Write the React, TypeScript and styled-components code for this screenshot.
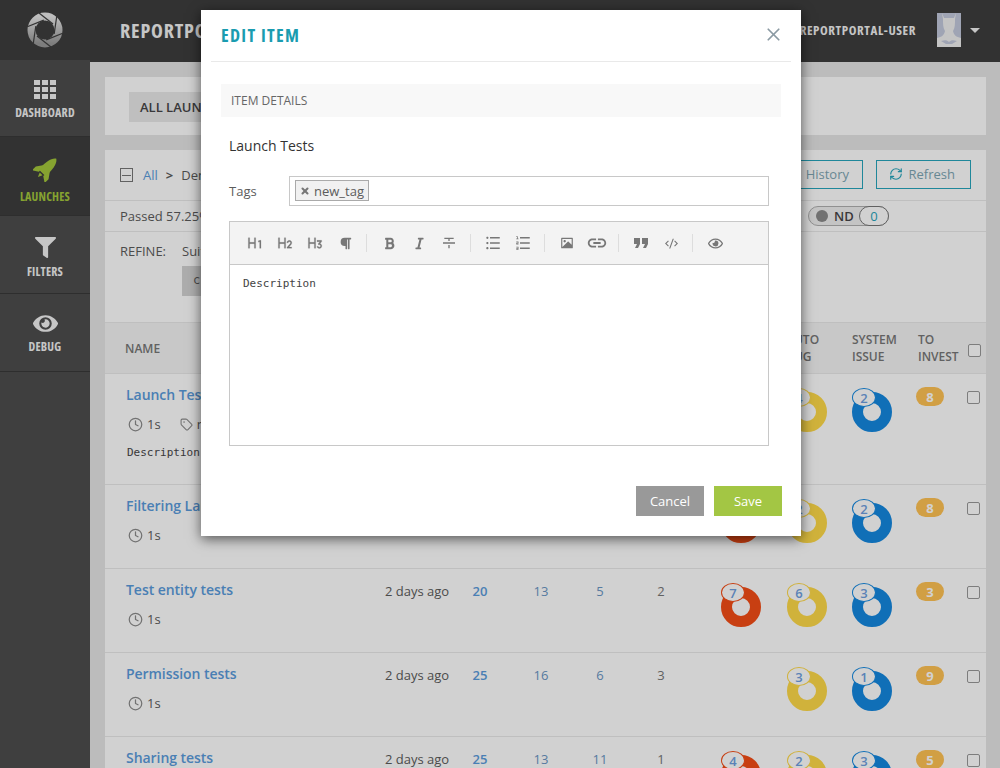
import * as React from 'react'
import styled, { createGlobalStyle } from 'styled-components'
import { Clock, RefreshCw, Tag, X } from 'lucide-react'
import { FaBold, FaFilter, FaItalic, FaParagraph, FaRegEye, FaEye } from 'react-icons/fa'
import { MdFormatQuote, MdLink } from 'react-icons/md'
import {
  RiCodeSSlashLine, RiH1, RiH2, RiH3, RiImageFill, RiListOrdered, RiListUnordered, RiStrikethrough2,
} from 'react-icons/ri'

const Global = createGlobalStyle`
  html, body { margin: 0; padding: 0; background: #e6e6e6; overflow: hidden; }
  body { font-family: "Open Sans", "Noto Sans", sans-serif; font-size: 13px; color: #5c5c5c; }
  * { box-sizing: border-box; }
`

const ROOT = styled.div`
  position: relative;
  display: flex;
  width: 1000px;
  height: 768px;
  overflow: hidden;
`
const Sidebar = styled.div`
  display: flex;
  flex-direction: column;
  width: 90px;
  flex: none;
  background: #4d4d4e;
`
const Logo = styled.div`
  display: flex;
  align-items: center;
  justify-content: center;
  height: 60px;
  background: #3e3e3e;
`
const NavItem = styled.div<{ $active?: boolean; $h: number; $top: number }>`
  display: flex;
  flex-direction: column;
  align-items: center;
  height: ${p => p.$h}px;
  padding-top: ${p => p.$top}px;
  background: ${p => (p.$active ? '#3e3e3e' : '#4d4d4e')};
  border-bottom: 1px solid #393939;
  color: ${p => (p.$active ? '#a4c73b' : '#f2f2f2')};
  svg {
    display: block;
  }
`
const NavLabel = styled.div<{ $mt: number }>`
  margin-top: ${p => p.$mt}px;
  font-weight: 700;
  font-stretch: 75%;
  font-size: 12px;
  line-height: 14px;
  letter-spacing: 0.2px;
`
const Main = styled.div`
  display: flex;
  flex-direction: column;
  flex: 1;
  min-width: 0;
`
const Header = styled.div`
  display: flex;
  align-items: center;
  height: 62px;
  flex: none;
  padding: 0 20px 2px 30px;
  background: #3e3e3e;
  color: #f2f2f2;
`
const Brand = styled.div`
  flex: 1;
  font-weight: 700;
  font-stretch: 75%;
  font-size: 20px;
  letter-spacing: 0.8px;
`
const UserName = styled.div`
  font-weight: 700;
  font-stretch: 75%;
  font-size: 13px;
  letter-spacing: 0.6px;
  margin-right: 21px;
`
const Caret = styled.div`
  margin-left: 9px;
  width: 0;
  height: 0;
  border-left: 5px solid transparent;
  border-right: 5px solid transparent;
  border-top: 5px solid #f2f2f2;
`
const Content = styled.div`
  display: flex;
  flex-direction: column;
  gap: 15px;
  padding: 15px 14px 0 15px;
`
const TabsCard = styled.div`
  height: 58px;
  padding: 15px 24px;
  background: #fff;
`
const TabButton = styled.div`
  display: inline-flex;
  align-items: center;
  width: 200px;
  height: 30px;
  padding-left: 11px;
  background: #e9e9e9;
  font-weight: 600;
  color: #464547;
`
const Card = styled.div`
  background: #fff;
`
const CrumbRow = styled.div`
  display: flex;
  align-items: center;
  height: 51px;
  padding: 0 15px;
  border-bottom: 1px solid #e9e9e9;
`
const MinusBox = styled.div`
  display: flex;
  align-items: center;
  justify-content: center;
  width: 13px;
  height: 14px;
  margin-right: 10px;
  border: 1px solid #777;
  &::after {
    content: '';
    width: 9px;
    height: 1px;
    background: #777;
  }
`
const CrumbLink = styled.span`
  color: #5a9bdc;
`
const CrumbSep = styled.span`
  margin: 0 8px 0 8px;
  font-weight: 700;
`
const Spacer = styled.div`
  flex: 1;
`
const OutlineButton = styled.div<{ $w: number; $pr: number }>`
  display: flex;
  align-items: center;
  justify-content: flex-end;
  gap: 6px;
  width: ${p => p.$w}px;
  height: 29px;
  margin-left: 13px;
  margin-bottom: 2px;
  padding-right: ${p => p.$pr}px;
  border: 1px solid #26a5bc;
  color: #7ea6b4;
`
const StatRow = styled.div`
  display: flex;
  align-items: center;
  height: 31px;
  padding: 0 15px;
  border-bottom: 1px solid #e9e9e9;
`
const NdPill = styled.div`
  display: flex;
  align-items: center;
  height: 20px;
  width: 81px;
  margin-right: 82px;
  padding-left: 7px;
  border: 1px solid #b0b0b0;
  border-radius: 10px;
  background: #f0f0f0;
  font-weight: 600;
  color: #464547;
`
const NdDot = styled.span`
  width: 12px;
  height: 12px;
  border-radius: 50%;
  background: #8a8a8a;
  margin-right: 6px;
`
const NdCount = styled.span`
  display: flex;
  align-items: center;
  justify-content: center;
  width: 30px;
  height: 20px;
  margin-left: auto;
  margin-right: -1px;
  border: 1px solid #777;
  border-radius: 10px;
  background: #fff;
  font-weight: 400;
  color: #26a5bc;
`
const RefineRow = styled.div`
  display: flex;
  height: 90px;
  padding: 10px 15px 0;
`
const RefineLabel = styled.div`
  width: 62px;
`
const Chip = styled.div`
  margin-top: 6px;
  width: 120px;
  height: 30px;
  padding: 7px 11px;
  background: #d4d4d4;
  font-family: "DejaVu Sans Mono", monospace;
  font-size: 12px;
`
const TableHead = styled.div`
  display: grid;
  grid-template-columns: 280px 70px 50px 72px 46px 76px 87px 66px 66px 50px 18px;
  align-items: center;
  height: 52px;
  padding-bottom: 1px;
  background: #f4f4f4;
  border-top: 1px solid #e9e9e9;
  border-bottom: 1px solid #e9e9e9;
  color: #777;
  font-weight: 600;
  font-size: 12px;
  line-height: 17px;
`
const NameHead = styled.div`
  padding-left: 20px;
  margin-top: 1px;
`
const Row = styled.div<{ $h: number }>`
  display: grid;
  grid-template-columns: 280px 70px 50px 72px 46px 76px 87px 65px 65px 51px 19px;
  align-items: start;
  height: ${p => p.$h}px;
  padding-top: 11px;
  border-bottom: 1px solid #e9e9e9;
`
const NameCell = styled.div`
  padding-left: 21px;
`
const Title = styled.div`
  font-size: 14px;
  font-weight: 600;
  line-height: 20px;
  letter-spacing: -0.05px;
  color: #5a9bdc;
`
const Meta = styled.div`
  display: flex;
  align-items: center;
  gap: 4px;
  height: 18px;
  margin-top: 10px;
  padding-left: 2px;
`
const MetaGap = styled.span`
  width: 11px;
`
const Mono = styled.div`
  margin-top: 11px;
  padding-left: 1px;
  font-family: "DejaVu Sans Mono", monospace;
  font-size: 11px;
  line-height: 18px;
  color: #464547;
`
const TimeCell = styled.div`
  margin-top: 1px;
  line-height: 20px;
`
const Num = styled.div<{ $strong?: boolean }>`
  margin-top: 1px;
  line-height: 20px;
  text-align: center;
  color: ${p => (p.$strong ? '#5a9bdc' : '#6a96c4')};
  font-weight: ${p => (p.$strong ? 600 : 400)};
`
const Plain = styled(Num)`
  color: #777;
`
const DonutCell = styled.div<{ $pad: number }>`
  padding-left: ${p => p.$pad}px;
`
const Donut = styled.div<{ $c: string }>`
  position: relative;
  width: 40px;
  height: 40px;
  margin-top: 7px;
  border: 11px solid ${p => p.$c};
  border-radius: 50%;
`
const DonutPill = styled.span<{ $c: string }>`
  position: absolute;
  top: -15px;
  left: -11px;
  display: flex;
  align-items: center;
  justify-content: center;
  width: 24px;
  height: 19px;
  border: 1px solid ${p => p.$c};
  border-radius: 50%;
  background: #fff;
  font-weight: 600;
  color: #6e9fe0;
`
const Badge = styled.div`
  display: flex;
  align-items: center;
  justify-content: center;
  width: 28px;
  height: 19px;
  margin-top: 2px;
  border-radius: 10px;
  background: #ffc254;
  color: #fff;
  font-weight: 700;
`
const Check = styled.div`
  width: 13px;
  height: 13px;
  margin-top: 6px;
  border: 1px solid #999;
  border-radius: 2px;
  background: #fff;
`
const Overlay = styled.div`
  position: absolute;
  inset: 0;
  background: rgba(0, 0, 0, 0.18);
`
const Modal = styled.div`
  position: absolute;
  left: 201px;
  top: 10px;
  display: flex;
  flex-direction: column;
  width: 600px;
  height: 526px;
  background: #fff;
  box-shadow: 0 3px 12px rgba(0, 0, 0, 0.6);
`
const ModalHead = styled.div`
  display: flex;
  align-items: center;
  justify-content: space-between;
  height: 52px;
  flex: none;
  margin: 0 10px;
  padding: 0 7px 2px 10px;
  border-bottom: 1px solid #e9e9e9;
  color: #8b9aa3;
`
const ModalTitle = styled.div`
  font-weight: 700;
  font-stretch: 75%;
  font-size: 18px;
  letter-spacing: 1.3px;
  color: #1a9cb0;
`
const ModalBody = styled.div`
  padding: 22px 20px 0;
`
const SectionBar = styled.div`
  display: flex;
  align-items: center;
  height: 33px;
  padding-left: 10px;
  background: #f8f8f8;
  font-size: 12px;
  color: #666;
`
const ItemName = styled.div`
  margin: 19px 0 20px 8px;
  font-size: 14px;
  line-height: 20px;
  font-weight: 500;
  color: #333;
`
const TagsRow = styled.div`
  display: flex;
  align-items: center;
  margin: 0 12px 15px 8px;
`
const TagsLabel = styled.div`
  width: 60px;
`
const TagsInput = styled.div`
  display: flex;
  align-items: center;
  flex: 1;
  height: 30px;
  padding-left: 5px;
  padding-bottom: 1px;
  border: 1px solid #c8c8c8;
`
const TagChip = styled.div`
  display: flex;
  align-items: center;
  gap: 4px;
  height: 21px;
  padding: 0 4px;
  border: 1px solid #aaa;
  background: #f1f1f1;
`
const ChipX = styled.span`
  display: flex;
  color: #777;
`
const Editor = styled.div`
  height: 225px;
  margin: 0 12px 40px 8px;
  border: 1px solid #c8c8c8;
`
const Toolbar = styled.div`
  display: flex;
  align-items: center;
  height: 43px;
  padding-left: 10px;
  background: #f3f3f3;
  border-bottom: 1px solid #c8c8c8;
`
const ToolButton = styled.div`
  display: flex;
  align-items: center;
  justify-content: center;
  width: 30px;
  color: #777;
`
const ToolSep = styled.div`
  width: 1px;
  height: 18px;
  margin: 0 7px 0 6px;
  background: #ddd;
`
const EditorText = styled.div`
  padding: 10px 13px;
  font-family: "DejaVu Sans Mono", monospace;
  font-size: 11px;
  line-height: 17px;
  color: #444;
`
const Footer = styled.div`
  display: flex;
  justify-content: flex-end;
  gap: 10px;
  margin-right: -1px;
`
const FootButton = styled.div<{ $bg: string }>`
  display: flex;
  align-items: center;
  justify-content: center;
  width: 68px;
  height: 30px;
  background: ${p => p.$bg};
  color: #fff;
`
const AvatarBox = styled.svg`
  flex: none;
`

const RED = '#f44d16'
const YEL = '#fed949'
const BLU = '#1488e0'

const LogoIcon = () => (
  <svg width="36" height="36" viewBox="0 0 36 36">
    <defs>
      <linearGradient id="lg" x1="0" y1="0" x2="0" y2="1">
        <stop offset="0" stopColor="#e8e8e8" />
        <stop offset="1" stopColor="#999" />
      </linearGradient>
    </defs>
    <circle cx="18" cy="18" r="13.5" fill="none" stroke="url(#lg)" strokeWidth="8" />
    {[0, 60, 120, 180, 240, 300].map(a => (
      <path key={a} d="M12 1 L26 12" stroke="#3e3e3e" strokeWidth="1.2" transform={`rotate(${a} 18 18)`} />
    ))}
  </svg>
)

const GridIcon = () => (
  <svg width="22" height="20" viewBox="0 0 22 20" fill="currentColor">
    {[0, 7, 14].flatMap(y => [0, 8, 16].map(x => <rect key={`${x}${y}`} x={x} y={y} width="6" height="5" />))}
  </svg>
)

const RocketIcon = () => (
  <svg width="24" height="24" viewBox="0 0 24 24" fill="currentColor">
    <g transform="rotate(45 12 12)">
      <path d="M12 -4 C16 -1 17.5 5 16.5 16 H7.5 C6.5 5 8 -1 12 -4 Z" />
      <path d="M8 9 L3 16 V21.5 L9 17.5 Z M16 9 L21 16 V21.5 L15 17.5 Z" />
      <path d="M10 17.5 H14 L12 22 Z" />
    </g>
  </svg>
)

const Avatar = () => (
  <AvatarBox width="24" height="34" viewBox="0 0 24 34">
    <rect width="24" height="34" fill="#f0f0f0" />
    <path d="M0 0 H24 V25 C19 24 17 22 16 18 C18 15 18 11 18 6 L19 0 L17 5 H7 L5 0 L6 6 C6 11 6 15 8 18 C7 22 5 24 0 25 Z" fill="#c3c9dc" />
    <path d="M4 28 C8 27 10 27 12 29 C14 27 16 27 20 28 L15 31 H9 Z" fill="#c3c9dc" />
  </AvatarBox>
)

type RowData = {
  name: string
  h: number
  total: number
  passed: number
  failed: number
  skipped: number
  pb?: number
  ab?: number
  si?: number
  ti: number
  tag?: string
  desc?: string
}

const rows: RowData[] = [
  { name: 'Launch Tests', h: 111, total: 20, passed: 13, failed: 5, skipped: 2, ab: 4, si: 2, ti: 8, tag: 'new_tag', desc: 'Description' },
  { name: 'Filtering Launches', h: 84, total: 20, passed: 13, failed: 5, skipped: 2, pb: 3, ab: 2, si: 2, ti: 8 },
  { name: 'Test entity tests', h: 84, total: 20, passed: 13, failed: 5, skipped: 2, pb: 7, ab: 6, si: 3, ti: 3 },
  { name: 'Permission tests', h: 84, total: 25, passed: 16, failed: 6, skipped: 3, ab: 3, si: 1, ti: 9 },
  { name: 'Sharing tests', h: 84, total: 25, passed: 13, failed: 11, skipped: 1, pb: 4, ab: 2, si: 3, ti: 5 },
]

const DonutFor = ({ value, color, pad }: { value?: number; color: string; pad: number }) => (
  <DonutCell $pad={pad}>
    {value !== undefined && (
      <Donut $c={color}>
        <DonutPill $c={color}>{value}</DonutPill>
      </Donut>
    )}
  </DonutCell>
)

export default function App() {
  return (
    <ROOT>
      <Global />
      <Sidebar>
        <Logo><LogoIcon /></Logo>
        <NavItem $h={77} $top={20}>
          <GridIcon />
          <NavLabel $mt={6}>DASHBOARD</NavLabel>
        </NavItem>
        <NavItem $h={79} $top={21} $active>
          <RocketIcon />
          <NavLabel $mt={8}>LAUNCHES</NavLabel>
        </NavItem>
        <NavItem $h={78} $top={21}>
          <FaFilter size={21} />
          <NavLabel $mt={7}>FILTERS</NavLabel>
        </NavItem>
        <NavItem $h={78} $top={17}>
          <FaEye size={25} />
          <NavLabel $mt={4}>DEBUG</NavLabel>
        </NavItem>
      </Sidebar>
      <Main>
        <Header>
          <Brand>REPORTPORTAL</Brand>
          <UserName>REPORTPORTAL-USER</UserName>
          <Avatar />
          <Caret />
        </Header>
        <Content>
          <TabsCard><TabButton>ALL LAUNCHES</TabButton></TabsCard>
          <Card>
            <CrumbRow>
              <MinusBox />
              <CrumbLink>All</CrumbLink>
              <CrumbSep>&gt;</CrumbSep>
              <span>Demo Api Tests</span>
              <Spacer />
              <OutlineButton $w={90} $pr={13}>History</OutlineButton>
              <OutlineButton $w={95} $pr={15}><RefreshCw size={14} color="#26a5bc" />Refresh</OutlineButton>
            </CrumbRow>
            <StatRow>
              <span>Passed 57.25%</span>
              <Spacer />
              <NdPill><NdDot />ND<NdCount>0</NdCount></NdPill>
            </StatRow>
            <RefineRow>
              <RefineLabel>REFINE:</RefineLabel>
              <div>
                <span>Suite name</span>
                <Chip>cr</Chip>
              </div>
            </RefineRow>
            <TableHead>
              <NameHead>NAME</NameHead>
              <div>START</div>
              <div>TOTAL</div>
              <div>PASSED</div>
              <div>FAILED</div>
              <div>SKIPPED</div>
              <div>PRODUCT<br />BUG</div>
              <div>AUTO<br />BUG</div>
              <div>SYSTEM<br />ISSUE</div>
              <div>TO<br />INVEST</div>
              <Check />
            </TableHead>
            {rows.map(r => (
              <Row key={r.name} $h={r.h}>
                <NameCell>
                  <Title>{r.name}</Title>
                  <Meta>
                    <Clock size={15} color="#8c8c8c" />
                    <span>1s</span>
                    {r.tag && <><MetaGap /><Tag size={13} color="#8c8c8c" /><span>{r.tag}</span></>}
                  </Meta>
                  {r.desc && <Mono>{r.desc}</Mono>}
                </NameCell>
                <TimeCell>2 days ago</TimeCell>
                <Num $strong>{r.total}</Num>
                <Num>{r.passed}</Num>
                <Num>{r.failed}</Num>
                <Plain>{r.skipped}</Plain>
                <DonutFor value={r.pb} color={RED} pad={22} />
                <DonutFor value={r.ab} color={YEL} pad={1} />
                <DonutFor value={r.si} color={BLU} pad={1} />
                <Badge>{r.ti}</Badge>
                <Check />
              </Row>
            ))}
          </Card>
        </Content>
      </Main>
      <Overlay />
      <Modal>
        <ModalHead>
          <ModalTitle>EDIT ITEM</ModalTitle>
          <X size={21} strokeWidth={2} />
        </ModalHead>
        <ModalBody>
          <SectionBar>ITEM DETAILS</SectionBar>
          <ItemName>Launch Tests</ItemName>
          <TagsRow>
            <TagsLabel>Tags</TagsLabel>
            <TagsInput>
              <TagChip>
                <ChipX><X size={10} strokeWidth={5} /></ChipX>
                new_tag
              </TagChip>
            </TagsInput>
          </TagsRow>
          <Editor>
            <Toolbar>
              <ToolButton><RiH1 size={16} stroke="currentColor" strokeWidth={0.3} /></ToolButton>
              <ToolButton><RiH2 size={16} stroke="currentColor" strokeWidth={0.3} /></ToolButton>
              <ToolButton><RiH3 size={16} stroke="currentColor" strokeWidth={0.3} /></ToolButton>
              <ToolButton><FaParagraph size={13} /></ToolButton>
              <ToolSep />
              <ToolButton><FaBold size={13} /></ToolButton>
              <ToolButton><FaItalic size={13} /></ToolButton>
              <ToolButton><RiStrikethrough2 size={16} /></ToolButton>
              <ToolSep />
              <ToolButton><RiListUnordered size={18} /></ToolButton>
              <ToolButton><RiListOrdered size={18} /></ToolButton>
              <ToolSep />
              <ToolButton><RiImageFill size={14} /></ToolButton>
              <ToolButton><MdLink size={22} /></ToolButton>
              <ToolSep />
              <ToolButton><MdFormatQuote size={24} /></ToolButton>
              <ToolButton><RiCodeSSlashLine size={13} /></ToolButton>
              <ToolSep />
              <ToolButton><FaRegEye size={15} /></ToolButton>
            </Toolbar>
            <EditorText>Description</EditorText>
          </Editor>
          <Footer>
            <FootButton $bg="#999">Cancel</FootButton>
            <FootButton $bg="#a3c644">Save</FootButton>
          </Footer>
        </ModalBody>
      </Modal>
    </ROOT>
  )
}
